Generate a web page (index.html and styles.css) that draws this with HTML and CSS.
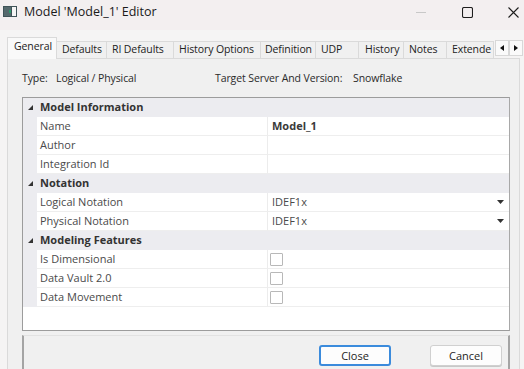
FILE: index.html
```html
<!DOCTYPE html>
<html>
<head>
<meta charset="utf-8">
<link rel="stylesheet" href="styles.css">
</head>
<body>
<div class="window">
  <div class="titlebar">
    <svg class="appicon" width="14" height="11" viewBox="0 0 14 11">
      <rect x="0" y="0" width="14" height="11" fill="#3f5358"/>
      <rect x="9" y="1" width="4" height="9" fill="#f4f4f4"/>
      <rect x="1" y="1" width="7" height="9" fill="#55696d"/>
      <rect x="6" y="4" width="2" height="3" fill="#2e9a6e"/>
    </svg>
    <span class="title">Model 'Model_1' Editor</span>
    <div class="controls">
      <div class="ctl"><svg width="10" height="10" viewBox="0 0 10 10"><line x1="0" y1="5.5" x2="10" y2="5.5" stroke="#c8c8c8" stroke-width="1"/></svg></div>
      <div class="ctl"><svg width="11" height="11" viewBox="0 0 11 11"><rect x="0.5" y="0.5" width="10" height="10" rx="1.5" fill="none" stroke="#1e1e1e" stroke-width="1.1"/></svg></div>
      <div class="ctl"><svg width="11" height="11" viewBox="0 0 11 11"><path d="M0.5 0.5 L10.5 10.5 M10.5 0.5 L0.5 10.5" stroke="#1e1e1e" stroke-width="1.1"/></svg></div>
    </div>
  </div>

  <div class="tabs">
    <div class="tab selected t1">General</div>
    <div class="tab t2">Defaults</div>
    <div class="tab t3">RI Defaults</div>
    <div class="tab t4">History Options</div>
    <div class="tab t5">Definition</div>
    <div class="tab t6">UDP</div>
    <div class="tab t7">History</div>
    <div class="tab t8">Notes</div>
    <div class="tab t9">Extende</div>
    <div class="scroll">
      <div class="sbtn"><svg width="4" height="6" viewBox="0 0 4 6"><polygon points="4,0 4,6 0,3" fill="#111"/></svg></div>
      <div class="sbtn"><svg width="4" height="6" viewBox="0 0 4 6"><polygon points="0,0 0,6 4,3" fill="#111"/></svg></div>
    </div>
  </div>

  <div class="panel">
    <div class="typeline">
      <span class="lbl1">Type:</span>
      <span class="val1">Logical / Physical</span>
      <span class="lbl2">Target Server And Version:</span>
      <span class="val2">Snowflake</span>
    </div>

    <div class="grid">
      <div class="row cat">
        <div class="margin"><svg class="tri" width="5" height="5" viewBox="0 0 5 5"><polygon points="5,0 5,5 0,5" fill="#333"/></svg></div>
        <div class="name">Model Information</div>
      </div>
      <div class="row">
        <div class="margin"></div><div class="name">Name</div><div class="value bold">Model_1</div>
      </div>
      <div class="row">
        <div class="margin"></div><div class="name">Author</div><div class="value"></div>
      </div>
      <div class="row">
        <div class="margin"></div><div class="name">Integration Id</div><div class="value"></div>
      </div>
      <div class="row cat">
        <div class="margin"><svg class="tri" width="5" height="5" viewBox="0 0 5 5"><polygon points="5,0 5,5 0,5" fill="#333"/></svg></div>
        <div class="name">Notation</div>
      </div>
      <div class="row">
        <div class="margin"></div><div class="name">Logical Notation</div>
        <div class="value combo">IDEF1x<svg class="drop" width="7" height="4" viewBox="0 0 7 4"><polygon points="0,0 7,0 3.5,4" fill="#333"/></svg></div>
      </div>
      <div class="row">
        <div class="margin"></div><div class="name">Physical Notation</div>
        <div class="value combo">IDEF1x<svg class="drop" width="7" height="4" viewBox="0 0 7 4"><polygon points="0,0 7,0 3.5,4" fill="#333"/></svg></div>
      </div>
      <div class="row cat">
        <div class="margin"><svg class="tri" width="5" height="5" viewBox="0 0 5 5"><polygon points="5,0 5,5 0,5" fill="#333"/></svg></div>
        <div class="name">Modeling Features</div>
      </div>
      <div class="row">
        <div class="margin"></div><div class="name">Is Dimensional</div><div class="value"><span class="check"></span></div>
      </div>
      <div class="row">
        <div class="margin"></div><div class="name">Data Vault 2.0</div><div class="value"><span class="check"></span></div>
      </div>
      <div class="row">
        <div class="margin"></div><div class="name">Data Movement</div><div class="value"><span class="check"></span></div>
      </div>
    </div>

    <div class="footer">
      <button class="btn primary">Close</button>
      <button class="btn">Cancel</button>
    </div>
  </div>
</div>
</body>
</html>
```

FILE: styles.css
```css
* { box-sizing: border-box; }
html, body {
  margin: 0;
  padding: 0;
  width: 524px;
  height: 369px;
  overflow: hidden;
  background: #f5f4f4;
  font-family: "Open Sans", "Noto Sans", sans-serif;
  color: #222;
}
.window {
  width: 524px;
  height: 369px;
  overflow: hidden;
}
.titlebar {
  height: 30px;
  display: flex;
  align-items: flex-start;
  background: #f3eff0;
}
.appicon {
  margin: 6px 0 0 3px;
}
.title {
  margin: 3px 0 0 7px;
  font-size: 12.5px;
  line-height: 18px;
  color: #1a1a1a;
}
.controls {
  margin-left: auto;
  margin-right: -12px;
  display: flex;
}
.ctl {
  width: 46px;
  height: 24px;
  display: flex;
  align-items: center;
  justify-content: center;
}
.tabs {
  display: flex;
  align-items: flex-end;
  height: 28px;
  padding-left: 7px;
  padding-top: 6px;
  position: relative;
  z-index: 1;
}
.tab {
  height: 17px;
  border: 1px solid #dadada;
  border-bottom: none;
  border-left: none;
  background: #f0f0f0;
  font-size: 10.5px;
  line-height: 15px;
  padding-left: 5px;
  color: #222;
  white-space: nowrap;
  overflow: hidden;
  letter-spacing: -0.1px;
}
.tab.selected {
  height: 22px;
  border-left: 1px solid #dadada;
  background: #f9f9f9;
  margin-bottom: -1px;
  line-height: 17px;
  padding-left: 6px;
}
.t1 { width: 50px; }
.t2 { width: 50px; }
.t3 { width: 67px; }
.t4 { width: 87px; }
.t5 { width: 55px; padding-left: 4px; }
.t6 { width: 43px; }
.t7 { width: 45px; padding-left: 6px; }
.t8 { width: 43px; }
.t9 { width: 47px; }
.scroll {
  display: flex;
  margin-left: 1px;
  margin-bottom: 2px;
}
.sbtn {
  width: 14px;
  height: 16px;
  border: 1px solid #d8d8d8;
  background: #fafafa;
  display: flex;
  align-items: center;
  justify-content: center;
}
.panel {
  margin: 0 4px 0 7px;
  border: 1px solid #dadada;
  background: #f0f0f0;
  height: 330px;
  padding: 12px 9px 0 14px;
}
.typeline {
  display: flex;
  font-size: 10.5px;
  line-height: 15px;
  color: #2a2a2a;
  white-space: nowrap;
  letter-spacing: -0.1px;
}
.lbl1 { width: 34px; }
.val1 { width: 159px; }
.lbl2 { width: 138px; }
.grid {
  margin-top: 11px;
  height: 234px;
  border: 1px solid #9c9c9c;
  border-right-color: #a8a8a8;
  background: #fff;
}
.row {
  display: grid;
  grid-template-columns: 14px 231px 1fr;
  height: 19px;
  font-size: 11px;
  line-height: 18px;
  color: #4a4a4a;
}
.margin {
  background: #ececf0;
  position: relative;
}
.row .name {
  padding-left: 3px;
  border-bottom: 1px solid #eeeeee;
  border-right: 1px solid #ececec;
  white-space: nowrap;
}
.row .value {
  padding-left: 4px;
  border-bottom: 1px solid #eeeeee;
  position: relative;
}
.row.cat {
  background: #ececf0;
}
.row.cat .name {
  grid-column: 2 / 4;
  font-weight: 700;
  color: #333;
  border: none;
  padding-left: 3px;
}
.tri {
  position: absolute;
  left: 5px;
  top: 7px;
}
.bold {
  font-weight: 700;
  color: #3a3a3a;
}
.combo {
  display: flex;
  align-items: flex-start;
}
.drop {
  margin-left: auto;
  margin-right: 5px;
  margin-top: 7px;
}
.check {
  display: block;
  width: 13px;
  height: 13px;
  margin: 3px 0 0 -2px;
  border: 1px solid #b8b8b8;
  background: #fff;
  border-radius: 1px;
}
.footer {
  margin-top: 4px;
  height: 60px;
  border-left: 2px solid #a4a4a4;
  border-right: 2px solid #a4a4a4;
  border-top: 1px solid #e2e2e2;
  display: flex;
  justify-content: flex-end;
  align-items: flex-start;
  padding: 9px 6px 0 0;
  gap: 39px;
}
.btn {
  width: 72px;
  height: 21px;
  font-family: "Open Sans", "Noto Sans", sans-serif;
  font-size: 11px;
  line-height: 17px;
  color: #1e1e1e;
  background: #fdfdfd;
  border: 1px solid #d0d0d0;
  border-radius: 3px;
  padding: 0;
  box-shadow: 0 1px 0 #c8c8c8;
}
.btn.primary {
  border: 2px solid #3b8bdc;
  box-shadow: none;
}
```
